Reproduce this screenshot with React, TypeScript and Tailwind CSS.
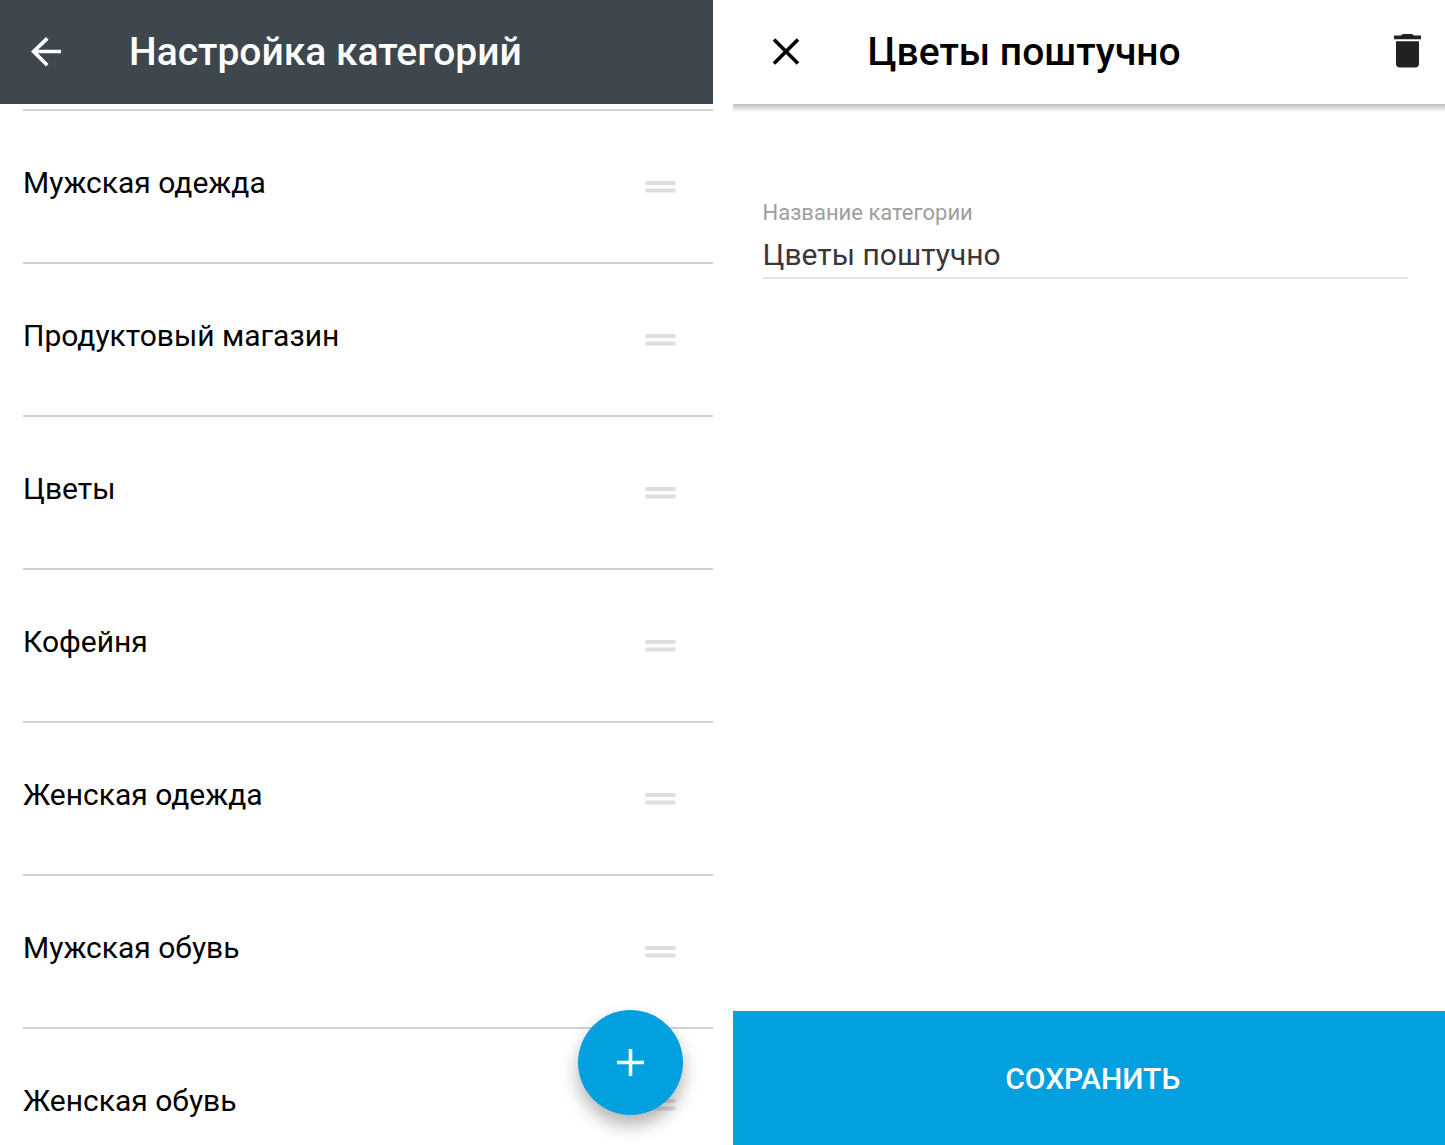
import { useState } from 'react'

const CATEGORIES = [
  'Мужская одежда',
  'Продуктовый магазин',
  'Цветы',
  'Кофейня',
  'Женская одежда',
  'Мужская обувь',
  'Женская обувь',
]

function CategoryList() {
  return (
    <section className="relative flex flex-1 flex-col overflow-hidden bg-white">
      <header className="flex h-26 shrink-0 items-center bg-[#3e464e] pl-6 text-white">
        <button type="button" aria-label="Назад" className="flex size-11 items-center justify-center">
          <svg viewBox="0 0 30 30" className="size-[30px]" fill="none" stroke="currentColor" strokeWidth="3.7">
            <path d="M30 14.5H3M16.300 1.300L2.600 14.500l13.700 13.700" />
          </svg>
        </button>
        <h1 className="ml-[61px] text-[39px] leading-11 font-medium">Настройка категорий</h1>
      </header>

      <ul className="min-h-0 flex-1 overflow-hidden pt-[5px] pl-[23px]">
        {CATEGORIES.map(name => (
          <li key={name} className="flex h-[153px] items-center justify-between border-t-2 border-[#d2d2d2] pr-9">
            <span className="pb-2 text-[30px] leading-9 text-black">{name}</span>
            <button type="button" aria-label={`Переместить: ${name}`} className="flex w-8 justify-center">
              <svg viewBox="0 0 32 12" className="h-3 w-8" fill="#dedede">
                <path d="M.5 0h30v4H.5zM.5 7.5h30v4H.5z" />
              </svg>
            </button>
          </li>
        ))}
      </ul>

      <button
        type="button"
        aria-label="Добавить категорию"
        className="absolute right-[30px] bottom-[30px] flex size-[105px] items-center justify-center rounded-full bg-[#03a0df] text-white shadow-[0_10px_18px_rgba(0,0,0,0.3)]"
      >
        <svg viewBox="0 0 27 27" className="size-[27px]" fill="currentColor">
          <path d="M11.7 0h3.6v11.7H27v3.6H15.3V27h-3.6V15.3H0v-3.6h11.7z" />
        </svg>
      </button>
    </section>
  )
}

function CategoryForm() {
  const [name, setName] = useState('Цветы поштучно')

  return (
    <section className="flex flex-1 flex-col bg-white">
      <header className="flex h-26 shrink-0 items-center pr-4 pl-[31px] text-black">
        <button type="button" aria-label="Закрыть" className="flex size-11 items-center justify-center">
          <svg viewBox="0 0 28 28" className="size-7" fill="none" stroke="currentColor" strokeWidth="3.6">
            <path d="M2 1.500l24 24M26 1.500l-24 24" />
          </svg>
        </button>
        <h1 className="ml-15 text-[39px] leading-11 font-medium">Цветы поштучно</h1>
        <button type="button" aria-label="Удалить" className="ml-auto flex size-11 items-center justify-center">
          <svg viewBox="0 0 27 36" className="h-9 w-[27px]" fill="#212121">
            <path d="M0 1.500h7L9 0h9l2 1.500h7V5.200H0zM2 7.200h23V29.500q0 4-4 4H6q-4 0-4-4z" />
          </svg>
        </button>
      </header>
      <div className="h-2 shrink-0 bg-linear-to-b from-[#bebebe] to-white" />

      <form className="flex flex-1 flex-col" onSubmit={e => e.preventDefault()}>
        <div className="flex flex-col pt-[87px] pr-[37px] pl-[30px]">
          <label htmlFor="category-name" className="text-[22px] leading-7 text-[#9e9e9e]">
            Название категории
          </label>
          <input
            id="category-name"
            type="text"
            value={name}
            onChange={e => setName(e.target.value)}
            className="h-[52px] border-b-2 border-[#e2e2e2] pt-1 text-[30px] text-[#383838] outline-none"
          />
        </div>
        <button type="submit" className="mt-auto h-[134px] bg-[#03a0df] pl-2 text-[30px] font-medium text-white">
          СОХРАНИТЬ
        </button>
      </form>
    </section>
  )
}

export default function App() {
  return (
    <main className="flex h-screen gap-5 bg-white font-[Roboto,sans-serif]">
      <CategoryList />
      <CategoryForm />
    </main>
  )
}
